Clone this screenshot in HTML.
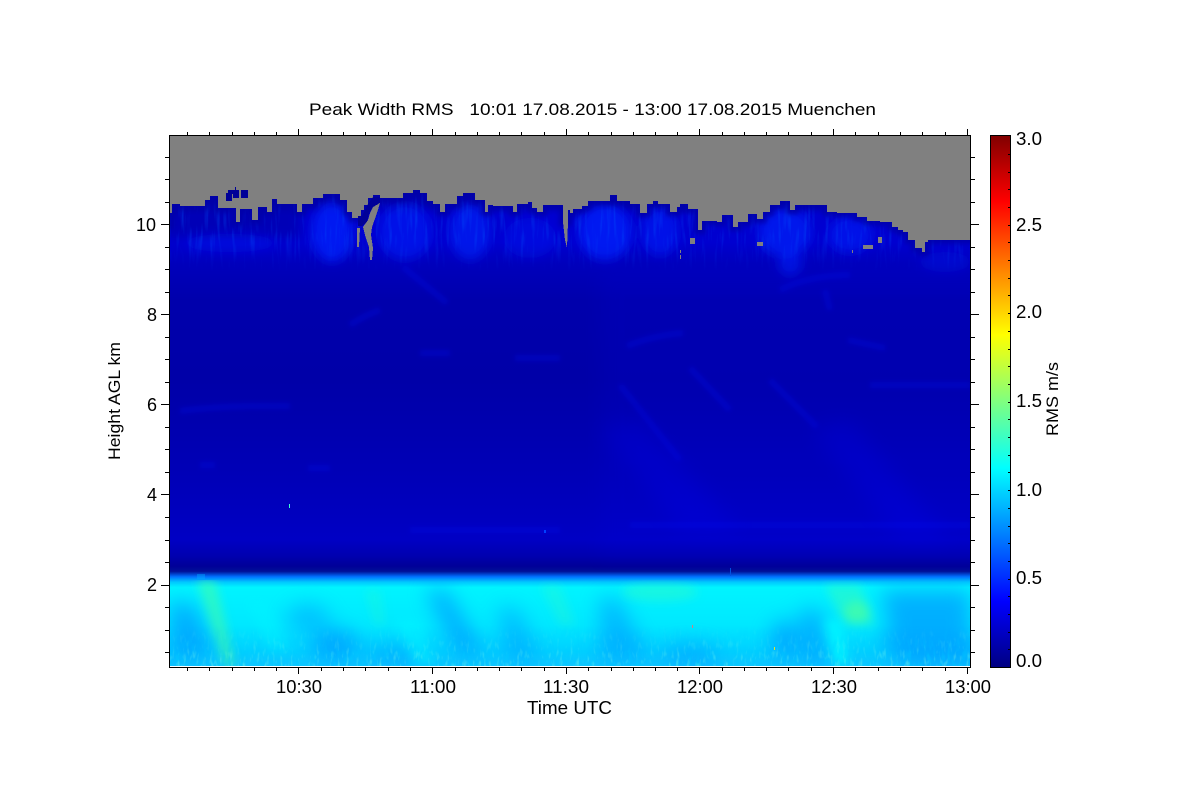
<!DOCTYPE html>
<html><head><meta charset="utf-8"><title>Peak Width RMS</title>
<style>html,body{margin:0;padding:0;background:#fff;width:1200px;height:800px;overflow:hidden}svg{display:block}
text{font-family:"Liberation Sans",Arial,sans-serif;fill:#000;white-space:pre}</style></head>
<body>
<svg xmlns="http://www.w3.org/2000/svg" width="1200" height="800" viewBox="0 0 1200 800">
<defs>
<linearGradient id="base" x1="0" y1="136" x2="0" y2="667" gradientUnits="userSpaceOnUse">
<stop offset="0" stop-color="#0000a8"/>
<stop offset=".122" stop-color="#0000b0"/>
<stop offset=".15" stop-color="#0000d0"/>
<stop offset=".2" stop-color="#0000d0"/>
<stop offset=".24" stop-color="#0000bc"/>
<stop offset=".31" stop-color="#0000ac"/>
<stop offset=".46" stop-color="#0000a8"/>
<stop offset=".56" stop-color="#0000b0"/>
<stop offset=".69" stop-color="#0000bc"/>
<stop offset=".76" stop-color="#0000c4"/>
<stop offset=".79" stop-color="#0000b0"/>
<stop offset=".81" stop-color="#000098"/>
<stop offset=".82" stop-color="#001098"/>
<stop offset=".83" stop-color="#0070ff"/>
<stop offset=".84" stop-color="#00c8ff"/>
<stop offset=".85" stop-color="#00f4ff"/>
<stop offset=".92" stop-color="#00e8ff"/>
<stop offset=".97" stop-color="#00d0ff"/>
<stop offset="1" stop-color="#10c4ff"/>
</linearGradient>
<linearGradient id="jet" x1="0" y1="0" x2="0" y2="1">
<stop offset="0" stop-color="#800000"/><stop offset=".125" stop-color="#ff0000"/>
<stop offset=".375" stop-color="#ffff00"/><stop offset=".625" stop-color="#00ffff"/>
<stop offset=".875" stop-color="#0000ff"/><stop offset="1" stop-color="#000080"/>
</linearGradient>
<linearGradient id="fadeBottom" x1="0" y1="625" x2="0" y2="666" gradientUnits="userSpaceOnUse">
<stop offset="0" stop-color="#fff" stop-opacity="0"/><stop offset=".55" stop-color="#fff" stop-opacity=".45"/><stop offset="1" stop-color="#fff" stop-opacity="1"/>
</linearGradient>
<linearGradient id="fadeCloud" x1="0" y1="190" x2="0" y2="272" gradientUnits="userSpaceOnUse">
<stop offset="0" stop-color="#fff" stop-opacity=".6"/><stop offset=".55" stop-color="#fff" stop-opacity=".7"/><stop offset="1" stop-color="#fff" stop-opacity="0"/>
</linearGradient>
<mask id="mB" maskUnits="userSpaceOnUse" x="170" y="620" width="800" height="47"><rect x="170" y="620" width="800" height="47" fill="url(#fadeBottom)"/></mask>
<mask id="mC" maskUnits="userSpaceOnUse" x="170" y="190" width="800" height="100"><rect x="170" y="190" width="800" height="100" fill="url(#fadeCloud)"/></mask>
<filter id="b2" filterUnits="userSpaceOnUse" x="100" y="100" width="950" height="620"><feGaussianBlur stdDeviation="2.5"/></filter>
<filter id="b5" filterUnits="userSpaceOnUse" x="100" y="100" width="950" height="620"><feGaussianBlur stdDeviation="5"/></filter>
<filter id="b9" filterUnits="userSpaceOnUse" x="100" y="100" width="950" height="620"><feGaussianBlur stdDeviation="10"/></filter>
<filter id="nG" filterUnits="userSpaceOnUse" x="170" y="620" width="800" height="47">
<feTurbulence type="fractalNoise" baseFrequency=".3 .1" numOctaves="2" seed="4"/>
<feColorMatrix type="matrix" values="0 0 0 0 .25  0 0 0 0 1  0 0 0 0 .8  3.4 0 0 0 -1.85"/>
</filter>
<filter id="nB" filterUnits="userSpaceOnUse" x="170" y="620" width="800" height="47">
<feTurbulence type="fractalNoise" baseFrequency=".25 .08" numOctaves="2" seed="11"/>
<feColorMatrix type="matrix" values="0 0 0 0 0  0 0 0 0 .6  0 0 0 0 1  3.4 0 0 0 -1.6"/>
</filter>
<filter id="nC" filterUnits="userSpaceOnUse" x="170" y="190" width="800" height="100">
<feTurbulence type="fractalNoise" baseFrequency=".28 .03" numOctaves="2" seed="7"/>
<feColorMatrix type="matrix" values="0 0 0 0 0  0 0 0 0 .12  0 0 0 0 1  3 0 0 0 -1.5"/>
</filter>
<clipPath id="plot"><rect x="170" y="136" width="800" height="531"/></clipPath>
<clipPath id="low"><rect x="170" y="580" width="800" height="87"/></clipPath>
<clipPath id="mid"><rect x="170" y="190" width="800" height="380"/></clipPath>
</defs>

<g clip-path="url(#plot)">
<rect x="170" y="136" width="800" height="531" fill="url(#base)"/>

<g clip-path="url(#mid)">
<rect x="600" y="270" width="400" height="290" fill="#0000ff" opacity=".08" filter="url(#b9)"/>
<!-- darker left cloud segment -->
<rect x="160" y="190" width="140" height="48" fill="#0000a4" opacity=".55" filter="url(#b5)"/>
<!-- cloud brightness -->
<g fill="#0024ff" filter="url(#b5)">
<ellipse cx="332" cy="232" rx="20" ry="30" opacity=".7"/>
<ellipse cx="405" cy="232" rx="26" ry="28" opacity=".5"/>
<ellipse cx="470" cy="232" rx="20" ry="28" opacity=".55"/>
<ellipse cx="530" cy="238" rx="26" ry="20" opacity=".3"/>
<ellipse cx="605" cy="232" rx="26" ry="28" opacity=".7"/>
<ellipse cx="660" cy="232" rx="18" ry="24" opacity=".5"/>
<ellipse cx="785" cy="232" rx="26" ry="24" opacity=".6"/>
<ellipse cx="790" cy="262" rx="12" ry="14" opacity=".5"/>
<ellipse cx="850" cy="235" rx="22" ry="18" opacity=".5"/>
<ellipse cx="230" cy="243" rx="45" ry="9" opacity=".3"/>
<ellipse cx="945" cy="262" rx="25" ry="10" opacity=".25"/>
</g>
<rect x="170" y="190" width="800" height="100" filter="url(#nC)" mask="url(#mC)" opacity=".45"/>
<!-- faint mid-level features -->
<g stroke="#0010f0" fill="none" stroke-width="6" filter="url(#b2)" opacity=".28">
<path d="M180 411Q225 405 290 406"/>
<path d="M403 267L447 303"/>
<path d="M350 325Q365 315 380 310"/>
<path d="M420 353H450"/>
<path d="M515 358H560"/>
<path d="M627 346Q655 335 683 333"/>
<path d="M770 380L817 427"/>
<path d="M690 368L730 410"/>
<path d="M620 385L680 460"/>
<path d="M870 385H970"/>
<path d="M825 290L830 310"/>
<path d="M780 290Q810 275 850 275"/>
<path d="M848 340L885 348"/>
<path d="M630 525H970"/>
<path d="M410 530H560"/>
<path d="M200 465H215"/>
<path d="M308 468H330"/>
</g>
<g fill="#0000ff" filter="url(#b9)" opacity=".18">
<path d="M600 430L680 530H740L640 420Z"/>
<path d="M810 430L900 540H950L850 420Z"/>
</g>
</g>

<!-- lower layer -->
<g clip-path="url(#low)">
<g fill="#0090ff" filter="url(#b9)" opacity=".65">
<path d="M170 600L195 605L215 655L170 660Z"/>
<ellipse cx="308" cy="618" rx="22" ry="14" opacity=".7"/>
<ellipse cx="335" cy="645" rx="24" ry="16"/>
<path d="M425 590L447 590L485 655L458 655Z"/>
<ellipse cx="395" cy="655" rx="30" ry="10" opacity=".7"/>
<path d="M498 605L520 610L540 660L505 660Z" opacity=".7"/>
<path d="M600 595L620 600L650 660L600 660Z" opacity=".8"/>
<ellipse cx="690" cy="655" rx="30" ry="12" opacity=".7"/>
<ellipse cx="785" cy="640" rx="14" ry="20"/>
<path d="M800 610L822 610L825 665L805 665Z"/>
<path d="M880 590L970 590L970 665L900 665Z"/>
<ellipse cx="905" cy="610" rx="20" ry="12"/>
<ellipse cx="905" cy="642" rx="24" ry="14"/>
<ellipse cx="960" cy="650" rx="18" ry="16"/>
</g>
<g fill="#50ff98" filter="url(#b5)">
<path d="M197 580L215 580L236 666L224 666Z" opacity=".5"/>
<ellipse cx="857" cy="612" rx="13" ry="11" opacity=".6"/>
<path d="M825 585L860 585L875 625L845 625Z" opacity=".35"/>
<ellipse cx="660" cy="592" rx="38" ry="9" opacity=".28"/>
<path d="M365 590L380 590L385 625L375 625Z" opacity=".18"/>
<path d="M540 585L560 585L575 625L560 625Z" opacity=".2"/>
</g>
<g fill="#00f8ff" filter="url(#b5)" opacity=".8">
<path d="M825 620L840 620L850 665L835 665Z"/>
<path d="M245 600L265 600L290 650L270 650Z" opacity=".5"/>
<path d="M395 620L420 620L435 665L415 665Z" opacity=".6"/>
</g>
<rect x="170" y="620" width="800" height="47" filter="url(#nB)" mask="url(#mB)" opacity=".5"/>
<rect x="170" y="620" width="800" height="47" filter="url(#nG)" mask="url(#mB)" opacity=".4"/>
</g>
<rect x="197" y="574" width="8" height="5" fill="#00b0ff" opacity=".4"/>
<rect x="730" y="568" width="1" height="8" fill="#0050e0"/>
<rect x="692" y="625" width="1" height="3" fill="#d08080"/>
<rect x="774" y="647" width="1" height="3" fill="#e8e020"/>
<rect x="289" y="504" width="1" height="4" fill="#40ffd0"/>
<rect x="544" y="530" width="2" height="3" fill="#0040ff"/>

<!-- dark fringe + no-data gray region above cloud tops -->
<path d="M169 135V225H170V213H172V204H180V206H205V200H210V196H218V208H236V222H240V209H252V220H258V207H267V212H272V199H277V204H297V212H302V204H313V198H323V194H340V200H347V212H352V218H358V216H361V210H364V205H368V198H373V195H380V198H403V193H413V190H420V193H427V201H433V204H440V212H445V204H447V204H457V196H463V193H475V200H485V212H488V205H493V206H513V212H517V204H528V202H532V208H537V212H543V205H563V222H568V210H570V213H573V209H582V206H588V201H610V195H617V201H630V204H640V213H647V204H653V201H658V204H670V212H677V207H680V204H688V209H698V230H702V221H717V222H722V215H733V227H738V222H748V214H757V219H763V212H770V205H780V201H790V210H795V205H827V212H837V213H857V217H867V221H880V222H892V227H898V230H903V232H908V240H915V248H922V252H925V242H928V240H970V135Z" fill="none" stroke="#0000a8" stroke-width="8" opacity=".8" filter="url(#b2)"/>
<g shape-rendering="crispEdges" fill="#808080">
<path d="M169 135V225H170V213H172V204H180V206H205V200H210V196H218V208H236V222H240V209H252V220H258V207H267V212H272V199H277V204H297V212H302V204H313V198H323V194H340V200H347V212H352V218H358V216H361V210H364V205H368V198H373V195H380V198H403V193H413V190H420V193H427V201H433V204H440V212H445V204H447V204H457V196H463V193H475V200H485V212H488V205H493V206H513V212H517V204H528V202H532V208H537V212H543V205H563V222H568V210H570V213H573V209H582V206H588V201H610V195H617V201H630V204H640V213H647V204H653V201H658V204H670V212H677V207H680V204H688V209H698V230H702V221H717V222H722V215H733V227H738V222H748V214H757V219H763V212H770V205H780V201H790V210H795V205H827V212H837V213H857V217H867V221H880V222H892V227H898V230H903V232H908V240H915V248H922V252H925V242H928V240H970V135Z"/>
<path d="M380 203L377 213L372 227L371 235L373 248L372 260L370 260L369 247L365 235L363 227L368 220L370 213L373 207Z"/>
<path d="M357 228H360L359 247H357Z"/>
<path d="M563 222H568L567 248L565 240Z"/>
<rect x="690" y="238" width="5" height="6"/>
<rect x="680" y="250" width="1" height="3"/>
<rect x="680" y="255" width="1" height="4"/>
<rect x="757" y="242" width="6" height="4"/>
<rect x="863" y="245" width="10" height="4"/>
<rect x="878" y="237" width="4" height="6"/>
<rect x="852" y="250" width="1" height="3"/>
</g>
<g shape-rendering="crispEdges" fill="#000098">
<rect x="226" y="193" width="6" height="8"/>
<rect x="228" y="190" width="5" height="4"/>
<rect x="233" y="190" width="6" height="8"/>
<rect x="241" y="190" width="7" height="8"/>
<rect x="235" y="187" width="1" height="3"/>
<path d="M358 216H362L368 204L373 197H380V203L373 207L369 214L367 222L362 226H358Z"/>
</g>
<rect x="170" y="666" width="800" height="1" fill="#fff" shape-rendering="crispEdges"/>
</g>

<!-- plot frame and ticks -->
<g shape-rendering="crispEdges" fill="none" stroke="#000" stroke-width="1">
<rect x="169.5" y="135.5" width="801" height="532"/>
<path d="M187.5 135v-3M209.5 135v-3M232.5 135v-3M254.5 135v-3M276.5 135v-3M298.5 135v-6M321.5 135v-3M343.5 135v-3M365.5 135v-3M388.5 135v-3M410.5 135v-3M432.5 135v-6M455.5 135v-3M477.5 135v-3M499.5 135v-3M521.5 135v-3M544.5 135v-3M566.5 135v-6M588.5 135v-3M611.5 135v-3M633.5 135v-3M655.5 135v-3M677.5 135v-3M699.5 135v-6M722.5 135v-3M744.5 135v-3M766.5 135v-3M788.5 135v-3M811.5 135v-3M833.5 135v-6M855.5 135v-3M878.5 135v-3M900.5 135v-3M922.5 135v-3M945.5 135v-3M967.5 135v-6"/>
<path d="M187.5 668v3M209.5 668v3M232.5 668v3M254.5 668v3M276.5 668v3M298.5 668v6M321.5 668v3M343.5 668v3M365.5 668v3M388.5 668v3M410.5 668v3M432.5 668v6M455.5 668v3M477.5 668v3M499.5 668v3M521.5 668v3M544.5 668v3M566.5 668v6M588.5 668v3M611.5 668v3M633.5 668v3M655.5 668v3M677.5 668v3M699.5 668v6M722.5 668v3M744.5 668v3M766.5 668v3M788.5 668v3M811.5 668v3M833.5 668v6M855.5 668v3M878.5 668v3M900.5 668v3M922.5 668v3M945.5 668v3M967.5 668v6"/>
<path d="M169 157.5h-4M169 179.5h-4M169 202.5h-4M169 224.5h-8M169 247.5h-4M169 269.5h-4M169 292.5h-4M169 314.5h-8M169 337.5h-4M169 359.5h-4M169 382.5h-4M169 404.5h-8M169 427.5h-4M169 449.5h-4M169 472.5h-4M169 494.5h-8M169 517.5h-4M169 540.5h-4M169 562.5h-4M169 585.5h-8M169 607.5h-4M169 630.5h-4M169 652.5h-4"/>
<path d="M971 157.5h4M971 179.5h4M971 202.5h4M971 224.5h8M971 247.5h4M971 269.5h4M971 292.5h4M971 314.5h8M971 337.5h4M971 359.5h4M971 382.5h4M971 404.5h8M971 427.5h4M971 449.5h4M971 472.5h4M971 494.5h8M971 517.5h4M971 540.5h4M971 562.5h4M971 585.5h8M971 607.5h4M971 630.5h4M971 652.5h4"/>
</g>

<!-- colorbar -->
<rect x="990" y="135" width="21" height="533" fill="url(#jet)"/>
<g shape-rendering="crispEdges" fill="none" stroke="#000" stroke-width="1">
<rect x="990.5" y="135.5" width="20" height="532"/>
<path d="M1010 649.5h-2M1010 632.5h-2M1010 614.5h-2M1010 596.5h-2M1010 579.5h-2M1010 561.5h-2M1010 543.5h-2M1010 526.5h-2M1010 508.5h-2M1010 490.5h-2M1010 472.5h-2M1010 455.5h-2M1010 437.5h-2M1010 419.5h-2M1010 402.5h-2M1010 384.5h-2M1010 366.5h-2M1010 349.5h-2M1010 331.5h-2M1010 313.5h-2M1010 295.5h-2M1010 278.5h-2M1010 260.5h-2M1010 242.5h-2M1010 225.5h-2M1010 207.5h-2M1010 189.5h-2M1010 172.5h-2M1010 154.5h-2"/>
</g>

<!-- text -->
<text x="309" y="115" font-size="17" textLength="567" lengthAdjust="spacingAndGlyphs">Peak Width RMS   10:01 17.08.2015 - 13:00 17.08.2015 Muenchen</text>
<g font-size="18">
<text x="276" y="693" textLength="46" lengthAdjust="spacingAndGlyphs">10:30</text>
<text x="410" y="693" textLength="46" lengthAdjust="spacingAndGlyphs">11:00</text>
<text x="543" y="693" textLength="46" lengthAdjust="spacingAndGlyphs">11:30</text>
<text x="677" y="693" textLength="46" lengthAdjust="spacingAndGlyphs">12:00</text>
<text x="811" y="693" textLength="46" lengthAdjust="spacingAndGlyphs">12:30</text>
<text x="945" y="693" textLength="46" lengthAdjust="spacingAndGlyphs">13:00</text>
<text x="527" y="714" textLength="85" lengthAdjust="spacingAndGlyphs">Time UTC</text>
<text x="136" y="231" textLength="20" lengthAdjust="spacingAndGlyphs">10</text>
<text x="147" y="321">8</text>
<text x="147" y="411">6</text>
<text x="147" y="501">4</text>
<text x="147" y="591">2</text>
<text x="1016" y="145" textLength="26" lengthAdjust="spacingAndGlyphs">3.0</text>
<text x="1016" y="231" textLength="26" lengthAdjust="spacingAndGlyphs">2.5</text>
<text x="1016" y="318" textLength="26" lengthAdjust="spacingAndGlyphs">2.0</text>
<text x="1016" y="407" textLength="26" lengthAdjust="spacingAndGlyphs">1.5</text>
<text x="1016" y="496" textLength="26" lengthAdjust="spacingAndGlyphs">1.0</text>
<text x="1016" y="584" textLength="26" lengthAdjust="spacingAndGlyphs">0.5</text>
<text x="1016" y="667" textLength="26" lengthAdjust="spacingAndGlyphs">0.0</text>
</g>
<text transform="translate(120 460) rotate(-90)" font-size="17" textLength="118" lengthAdjust="spacingAndGlyphs">Height AGL km</text>
<text transform="translate(1058 436) rotate(-90)" font-size="17" textLength="74" lengthAdjust="spacingAndGlyphs">RMS m/s</text>
</svg>
</body></html>
